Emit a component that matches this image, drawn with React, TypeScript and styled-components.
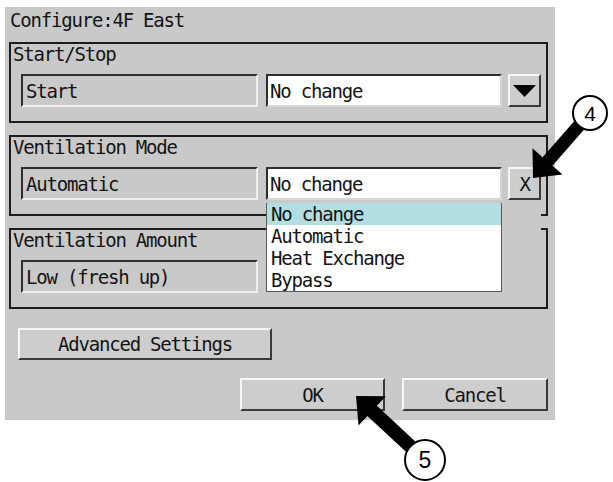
import styled, { createGlobalStyle } from 'styled-components';

const GlobalStyle = createGlobalStyle`
	html, body {
		margin: 0;
		padding: 0;
		background: #ffffff;
	}
`;

const Page = styled.div`
	position: relative;
	width: 613px;
	height: 482px;
	box-sizing: border-box;
	padding: 7px 0 0 5px;
`;

const Dialog = styled.div`
	width: 550px;
	height: 413px;
	box-sizing: border-box;
	background: #c9c9c9;
	padding: 0 7px 0 4px;
	display: flex;
	flex-direction: column;
	font-family: "DejaVu Sans Mono", "Liberation Mono", monospace;
	font-size: 19px;
	letter-spacing: -1.2px;
	color: #141414;
`;

const Title = styled.div`
	height: 35px;
	padding-left: 1px;
	line-height: 26px;
	white-space: pre;
`;

const Group = styled.section`
	position: relative;
	height: 81px;
	box-sizing: border-box;
	border: 2px solid #1c1c1c;
	display: flex;
	flex-direction: column;

	& + & {
		margin-top: 12px;
	}
`;

const GroupTitle = styled.div`
	height: 30px;
	padding-left: 2px;
	line-height: 20px;
	white-space: pre;
`;

const Row = styled.div`
	height: 33px;
	display: flex;
	gap: 8px;
	padding: 0 5px 0 10px;
`;

const Field = styled.div<{ $white?: boolean }>`
	width: ${({ $white }) => ($white ? '236px' : '237px')};
	height: 33px;
	box-sizing: border-box;
	display: flex;
	align-items: center;
	padding-left: ${({ $white }) => ($white ? '2px' : '3px')};
	background: ${({ $white }) => ($white ? '#ffffff' : '#c9c9c9')};
	border-top: 2px solid #2e2e2e;
	border-left: 2px solid #2e2e2e;
	border-bottom: 2px solid ${({ $white }) => ($white ? '#d6d6d6' : '#eeeeee')};
	border-right: 2px solid ${({ $white }) => ($white ? '#d6d6d6' : '#eeeeee')};
	white-space: pre;
`;

const Combo = styled.div`
	position: relative;
	display: flex;
	gap: 6px;
`;

const RaisedButton = styled.button<{ $w: number; $h?: number }>`
	width: ${({ $w }) => $w}px;
	height: ${({ $h }) => $h ?? 33}px;
	box-sizing: border-box;
	margin: 0;
	padding: 0;
	display: flex;
	align-items: center;
	justify-content: center;
	background: #cdcdcd;
	border-top: 2px solid #f6f6f6;
	border-left: 2px solid #f6f6f6;
	border-bottom: 2px solid #3a3a3a;
	border-right: 2px solid #3a3a3a;
	font: inherit;
	letter-spacing: inherit;
	color: inherit;
	white-space: pre;
`;

const Popup = styled.div`
	position: absolute;
	top: 100%;
	left: 0;
	width: 275px;
	height: 93px;
	padding-top: 3px;
	box-sizing: border-box;
	background: #c9c9c9;
	z-index: 2;
`;

const List = styled.ul`
	width: 236px;
	margin: 0;
	padding: 0;
	list-style: none;
	box-sizing: border-box;
	background: #ffffff;
	border: 1px solid #5a5a5a;
	border-top: none;
`;

const Item = styled.li<{ $active?: boolean }>`
	height: 22px;
	line-height: 22px;
	padding-left: 4px;
	background: ${({ $active }) => ($active ? '#b2dde1' : 'transparent')};
	white-space: pre;
`;

const AdvancedRow = styled.div`
	margin-top: 19px;
	padding-left: 9px;
`;

const Footer = styled.div`
	margin-top: 18px;
	display: flex;
	justify-content: flex-end;
	gap: 17px;
`;

const Callouts = styled.svg`
	position: absolute;
	top: 0;
	left: 0;
	pointer-events: none;
	font-family: "Liberation Sans", Arial, sans-serif;
`;

type Pt = [number, number];

// arrow shape from a callout circle toward its tip
const arrowPoints = (from: Pt, tip: Pt, headLen: number, headHalf: number, shaftHalf: number) => {
	const dx = tip[0] - from[0];
	const dy = tip[1] - from[1];
	const len = Math.hypot(dx, dy);
	const ux = dx / len;
	const uy = dy / len;
	const nx = -uy;
	const ny = ux;
	const bx = tip[0] - ux * headLen;
	const by = tip[1] - uy * headLen;
	const pts: Pt[] = [
		[from[0] + nx * shaftHalf, from[1] + ny * shaftHalf],
		[bx + nx * shaftHalf, by + ny * shaftHalf],
		[bx + nx * headHalf, by + ny * headHalf],
		tip,
		[bx - nx * headHalf, by - ny * headHalf],
		[bx - nx * shaftHalf, by - ny * shaftHalf],
		[from[0] - nx * shaftHalf, from[1] - ny * shaftHalf],
	];
	return pts.map((p) => `${p[0].toFixed(1)},${p[1].toFixed(1)}`).join(' ');
};

const Callout = ({ c, r, tip, label, size, shaft }: { c: Pt; r: number; tip: Pt; label: string; size: number; shaft: number }) => (
	<g>
		<polygon points={arrowPoints(c, tip, 22, 20, shaft)} fill="#000" />
		<circle cx={c[0]} cy={c[1]} r={r} fill="#fff" stroke="#000" strokeWidth={2} />
		<text x={c[0]} y={c[1] + size * 0.36} textAnchor="middle" fontSize={size} fill="#000">
			{label}
		</text>
	</g>
);

const modes = ['No change', 'Automatic', 'Heat Exchange', 'Bypass'];

const App = () => {
	return (
		<Page>
			<GlobalStyle />
			<Dialog>
				<Title>Configure:4F East</Title>

				<Group>
					<GroupTitle>Start/Stop</GroupTitle>
					<Row>
						<Field>Start</Field>
						<Combo>
							<Field $white>No change</Field>
							<RaisedButton $w={33}>
								<svg width="23" height="12" viewBox="0 0 23 12">
									<polygon points="0,0 23,0 11.5,12" fill="#000" />
								</svg>
							</RaisedButton>
						</Combo>
					</Row>
				</Group>

				<Group>
					<GroupTitle>Ventilation Mode</GroupTitle>
					<Row>
						<Field>Automatic</Field>
						<Combo>
							<Field $white>No change</Field>
							<RaisedButton $w={33}>X</RaisedButton>
							<Popup>
								<List>
									{modes.map((m, i) => (
										<Item key={m} $active={i === 0}>
											{m}
										</Item>
									))}
								</List>
							</Popup>
						</Combo>
					</Row>
				</Group>

				<Group>
					<GroupTitle>Ventilation Amount</GroupTitle>
					<Row>
						<Field>Low (fresh up)</Field>
					</Row>
				</Group>

				<AdvancedRow>
					<RaisedButton $w={254} $h={32}>Advanced Settings</RaisedButton>
				</AdvancedRow>

				<Footer>
					<RaisedButton $w={145}>OK</RaisedButton>
					<RaisedButton $w={146}>Cancel</RaisedButton>
				</Footer>
			</Dialog>

			<Callouts width="613" height="482" viewBox="0 0 613 482">
				<Callout c={[590, 113]} r={17} tip={[533, 178]} label="4" size={21} shaft={6.5} />
				<Callout c={[425, 460]} r={20} tip={[356, 396]} label="5" size={23} shaft={7} />
			</Callouts>
		</Page>
	);
};

export default App;
